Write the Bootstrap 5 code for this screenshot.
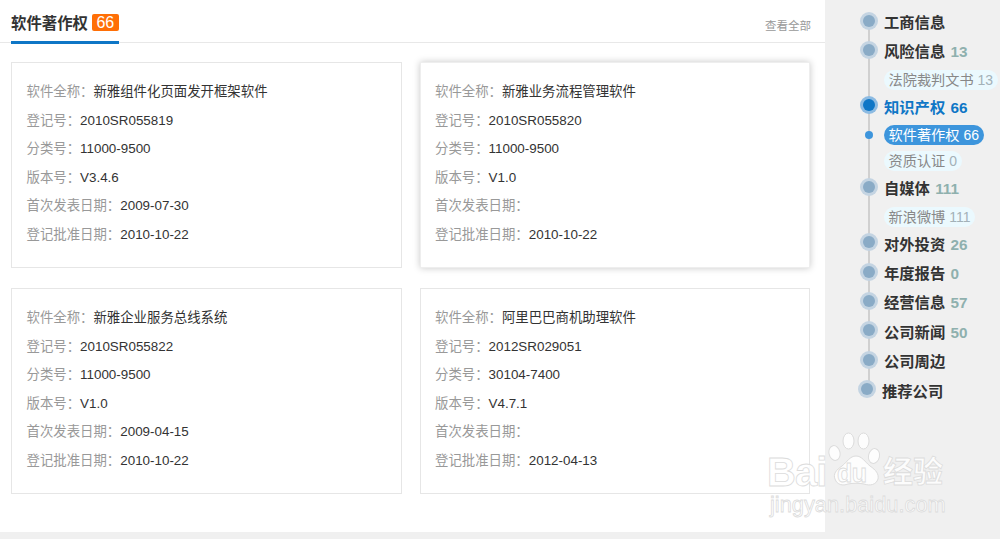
<!DOCTYPE html>
<html lang="zh">
<head>
<meta charset="UTF-8">
<title>软件著作权</title>
<link href="https://cdn.jsdelivr.net/npm/bootstrap@5.3.0/dist/css/bootstrap.min.css" rel="stylesheet">
<style>
html, body { height: 100%; }
body { background: #f0f0f0; font-family: "Liberation Sans", "Noto Sans CJK SC", sans-serif; font-size: 13.4px; color: #333; overflow: hidden; position: relative; }
.page-wrap { height: 539px; }
.main-pane { width: 825px; height: 532px; background: #fff; }
.sec-head { height: 43px; border-bottom: 1px solid #e8e8e8; padding: 0 14px 0 11px; }
.sec-title { height: 44px; border-bottom: 3px solid #0e76c6; font-size: 15.4px; font-weight: 700; color: #333; padding-top: 13px; line-height: 22px; }
.sec-count { display: inline-block; background: #ff6f06; color: #fff; font-size: 16px; font-weight: 400; line-height: 17px; height: 17px; padding: 0 4.5px; border-radius: 2px; margin-left: 4px; vertical-align: 1px; }
.see-all { color: #999; font-size: 11.5px; padding-top: 18px; line-height: 16px; }
.card-grid { display: grid; grid-template-columns: 390.5px 390.5px; column-gap: 18px; row-gap: 20px; padding: 19px 0 0 11px; }
.soft-box { height: 206px; border: 1px solid #e6e6e6; padding: 13px 14.5px 0; }
.soft-box.lifted { border-color: #eee; box-shadow: 0 0 7px rgba(0,0,0,.22); }
.soft-line { height: 28.6px; line-height: 28.6px; white-space: nowrap; }
.soft-line span { color: #999; }
.soft-line i { font-style: normal; font-family: "Noto Sans CJK TC", sans-serif; }
.side-pane { width: 175px; padding: 8px 0 0 35px; position: relative; }
.side-track { position: absolute; left: 43px; top: 20px; width: 2px; height: 370px; background: #d0d0d0; }
.side-row { position: relative; height: 29.4px; line-height: 29px; padding-left: 24px; font-size: 15.3px; font-weight: 700; color: #333; white-space: nowrap; }
.side-row b { color: #8fb0ae; font-weight: 700; margin-left: 1px; }
.side-row.current, .side-row.current b { color: #0e76c6; }
.side-row.shifted { padding-left: 22px; }
.side-dot { position: absolute; left: 3px; top: 6.7px; width: 12px; height: 12px; border-radius: 50%; background: #8aabc6; box-shadow: 0 0 0 3px #c4d4e2; }
.side-row.shifted .side-dot { left: 1px; }
.side-row.current .side-dot { background: #0e76c6; box-shadow: 0 0 0 3px #8dbbe2; }
.side-sub { position: relative; height: 26px; padding-left: 24px; white-space: nowrap; }
.sub-pill { display: inline-block; background: #ebf9fe; color: #888; font-size: 14.2px; line-height: 20px; height: 20px; padding: 0 5px 0 4.5px; border-radius: 10px; margin-top: 3px; }
.sub-pill b { font-weight: 400; color: #a3b1b8; font-size: 14px; }
.sub-pill.active { background: #3d95dc; color: #fff; }
.sub-pill.active b { color: #fff; }
.sub-dot { position: absolute; left: 4.5px; top: 9px; width: 8px; height: 8px; border-radius: 50%; background: #3d95dc; }
.wm { position: absolute; left: 765px; top: 430px; width: 185px; height: 90px; pointer-events: none; }
.wm-text { position: absolute; color: rgba(255,255,255,.85); -webkit-text-stroke: .8px #dcdcdc; white-space: nowrap; }
.wm-bai { left: 2px; top: 21.5px; font-size: 40px; font-weight: 700; letter-spacing: -1px; line-height: 40px; }
.wm-du { left: 72px; top: 31px; font-size: 25px; font-weight: 700; line-height: 24px; letter-spacing: -.5px; }
.wm-jy { left: 118px; top: 24px; font-size: 30px; font-weight: 700; line-height: 36px; }
.wm-url { left: 5px; top: 65px; font-size: 21.8px; line-height: 20px; }
.wm svg { position: absolute; left: 63px; top: 2px; }
</style>
</head>
<body>
<div class="page-wrap d-flex">
  <div class="main-pane">
    <div class="sec-head d-flex justify-content-between">
      <div class="sec-title">软件著作权<span class="sec-count">66</span></div>
      <div class="see-all">查看全部</div>
    </div>
    <div class="card-grid">
      <div class="soft-box">
        <div class="soft-line"><span>软件全称<i>：</i></span>新雅组件化页面发开框架软件</div>
        <div class="soft-line"><span>登记号<i>：</i></span>2010SR055819</div>
        <div class="soft-line"><span>分类号<i>：</i></span>11000-9500</div>
        <div class="soft-line"><span>版本号<i>：</i></span>V3.4.6</div>
        <div class="soft-line"><span>首次发表日期<i>：</i></span>2009-07-30</div>
        <div class="soft-line"><span>登记批准日期<i>：</i></span>2010-10-22</div>
      </div>
      <div class="soft-box lifted">
        <div class="soft-line"><span>软件全称<i>：</i></span>新雅业务流程管理软件</div>
        <div class="soft-line"><span>登记号<i>：</i></span>2010SR055820</div>
        <div class="soft-line"><span>分类号<i>：</i></span>11000-9500</div>
        <div class="soft-line"><span>版本号<i>：</i></span>V1.0</div>
        <div class="soft-line"><span>首次发表日期<i>：</i></span></div>
        <div class="soft-line"><span>登记批准日期<i>：</i></span>2010-10-22</div>
      </div>
      <div class="soft-box">
        <div class="soft-line"><span>软件全称<i>：</i></span>新雅企业服务总线系统</div>
        <div class="soft-line"><span>登记号<i>：</i></span>2010SR055822</div>
        <div class="soft-line"><span>分类号<i>：</i></span>11000-9500</div>
        <div class="soft-line"><span>版本号<i>：</i></span>V1.0</div>
        <div class="soft-line"><span>首次发表日期<i>：</i></span>2009-04-15</div>
        <div class="soft-line"><span>登记批准日期<i>：</i></span>2010-10-22</div>
      </div>
      <div class="soft-box">
        <div class="soft-line"><span>软件全称<i>：</i></span>阿里巴巴商机助理软件</div>
        <div class="soft-line"><span>登记号<i>：</i></span>2012SR029051</div>
        <div class="soft-line"><span>分类号<i>：</i></span>30104-7400</div>
        <div class="soft-line"><span>版本号<i>：</i></span>V4.7.1</div>
        <div class="soft-line"><span>首次发表日期<i>：</i></span></div>
        <div class="soft-line"><span>登记批准日期<i>：</i></span>2012-04-13</div>
      </div>
    </div>
  </div>
  <div class="side-pane">
    <div class="side-track"></div>
    <div class="side-row"><i class="side-dot"></i>工商信息</div>
    <div class="side-row"><i class="side-dot"></i>风险信息 <b>13</b></div>
    <div class="side-sub"><span class="sub-pill">法院裁判文书 <b>13</b></span></div>
    <div class="side-row current"><i class="side-dot"></i>知识产权 <b>66</b></div>
    <div class="side-sub"><i class="sub-dot"></i><span class="sub-pill active">软件著作权 <b>66</b></span></div>
    <div class="side-sub"><span class="sub-pill">资质认证 <b>0</b></span></div>
    <div class="side-row"><i class="side-dot"></i>自媒体 <b>111</b></div>
    <div class="side-sub"><span class="sub-pill">新浪微博 <b>111</b></span></div>
    <div class="side-row"><i class="side-dot"></i>对外投资 <b>26</b></div>
    <div class="side-row"><i class="side-dot"></i>年度报告 <b>0</b></div>
    <div class="side-row"><i class="side-dot"></i>经营信息 <b>57</b></div>
    <div class="side-row"><i class="side-dot"></i>公司新闻 <b>50</b></div>
    <div class="side-row"><i class="side-dot"></i>公司周边</div>
    <div class="side-row shifted"><i class="side-dot"></i>推荐公司</div>
  </div>
</div>
<div class="wm">
  <svg width="56" height="56" viewBox="0 0 56 56" fill="rgba(255,255,255,.85)" stroke="#dcdcdc" stroke-width="1">
    <ellipse cx="6.5" cy="21" rx="5.5" ry="7.5" transform="rotate(-12 6.5 21)"/>
    <ellipse cx="20.5" cy="9" rx="5.5" ry="8"/>
    <ellipse cx="35.5" cy="9" rx="5.5" ry="8"/>
    <ellipse cx="46" cy="24" rx="5.5" ry="7.5" transform="rotate(12 46 24)"/>
    <path d="M28 24c-6 0-9 6-14 10-6 4-9 8-7 13 2 6 8 7 13 5 5-1 11-1 16 0 6 2 12 1 14-5 1-5-2-9-8-13-5-4-8-10-14-10z"/>
  </svg>
  <div class="wm-text wm-bai">Bai</div>
  <div class="wm-text wm-du">du</div>
  <div class="wm-text wm-jy">经验</div>
  <div class="wm-text wm-url">jingyan.baidu.com</div>
</div>
<script src="https://cdn.jsdelivr.net/npm/bootstrap@5.3.0/dist/js/bootstrap.bundle.min.js"></script>
</body>
</html>
